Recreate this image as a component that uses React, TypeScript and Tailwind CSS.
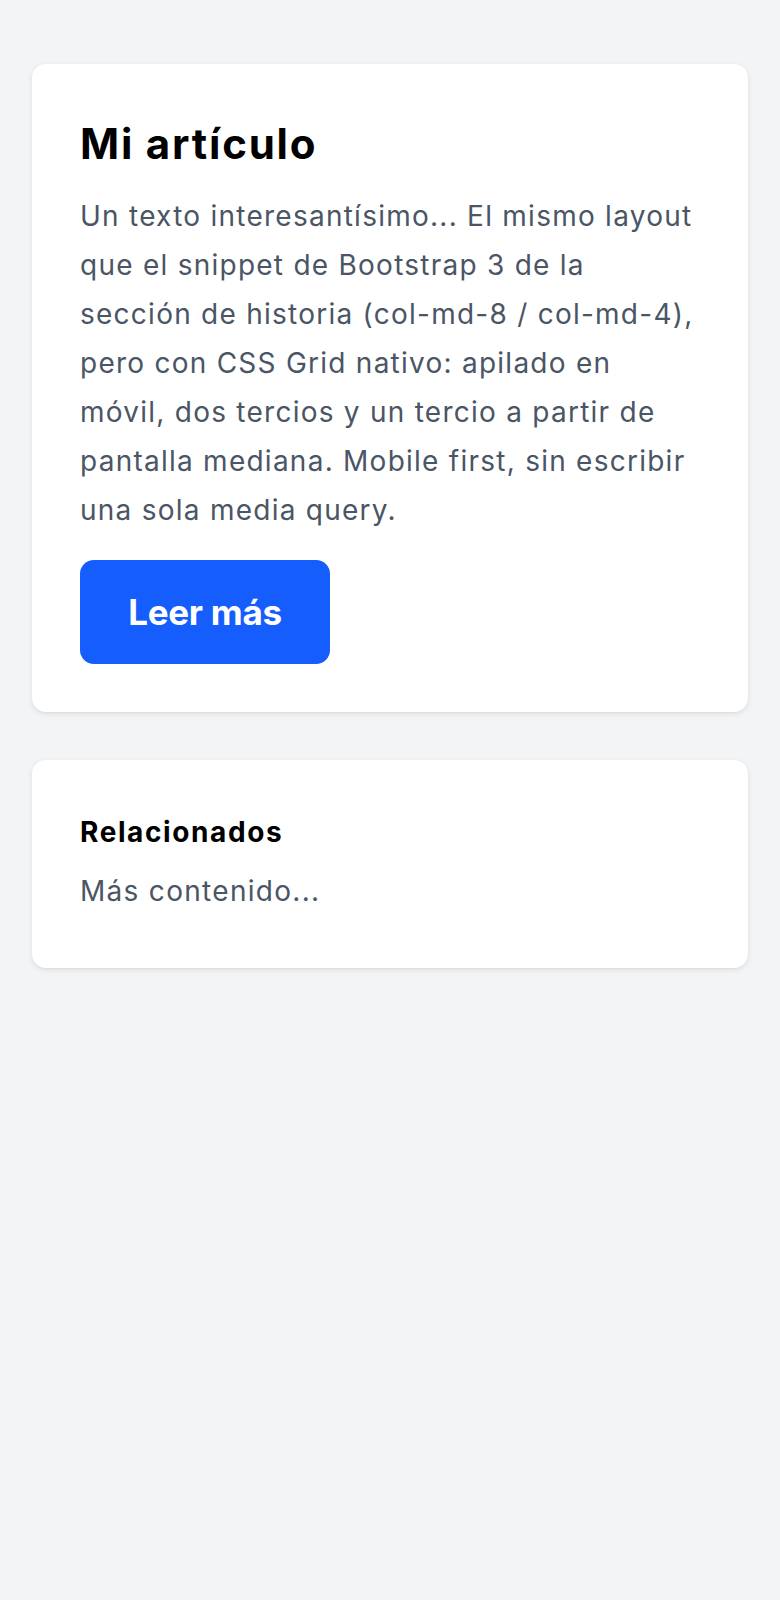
import React from 'react';

const Card: React.FC<{ className?: string; children: React.ReactNode }> = ({ className = '', children }) => (
  <div className={`bg-white rounded-[14px] shadow-[0_2px_6px_rgba(0,0,0,0.08),0_1px_2px_rgba(0,0,0,0.04)] ${className}`}>
    {children}
  </div>
);

export default function App() {
  return (
    <div className="min-h-[1600px] bg-[#f3f4f6] px-8 pt-16 font-['Inter','Noto_Sans',sans-serif]">
      <div className="grid grid-cols-1 gap-12">
        {/* main column */}
        <Card className="p-12">
          <h1 className="text-[42px] leading-[63px] font-bold text-black tracking-[1.8px]">Mi artículo</h1>
          <p className="mt-[17px] text-[28px] leading-[49px] text-[#4a5565] tracking-[1.25px]">
            Un texto interesantísimo... El mismo layout que el snippet de Bootstrap 3 de la sección de historia
            (col-md-8 / col-md-4), pero con CSS Grid nativo: apilado en móvil, dos tercios y un tercio a partir de
            pantalla mediana. Mobile first, sin escribir una sola media query.
          </p>
          <button className="mt-[25px] w-[250px] py-[26px] rounded-[14px] bg-[#155dfc] text-white text-[35px] leading-[52px] font-bold tracking-[-0.3px]">
            Leer más
          </button>
        </Card>

        {/* sidebar */}
        <Card className="px-12 pt-12 pb-[52px]">
          <h2 className="text-[28px] leading-[49px] font-bold text-black tracking-[1.6px]">Relacionados</h2>
          <p className="mt-[10px] text-[28px] leading-[49px] text-[#4a5565] tracking-[1.3px]">Más contenido...</p>
        </Card>
      </div>
    </div>
  );
}
